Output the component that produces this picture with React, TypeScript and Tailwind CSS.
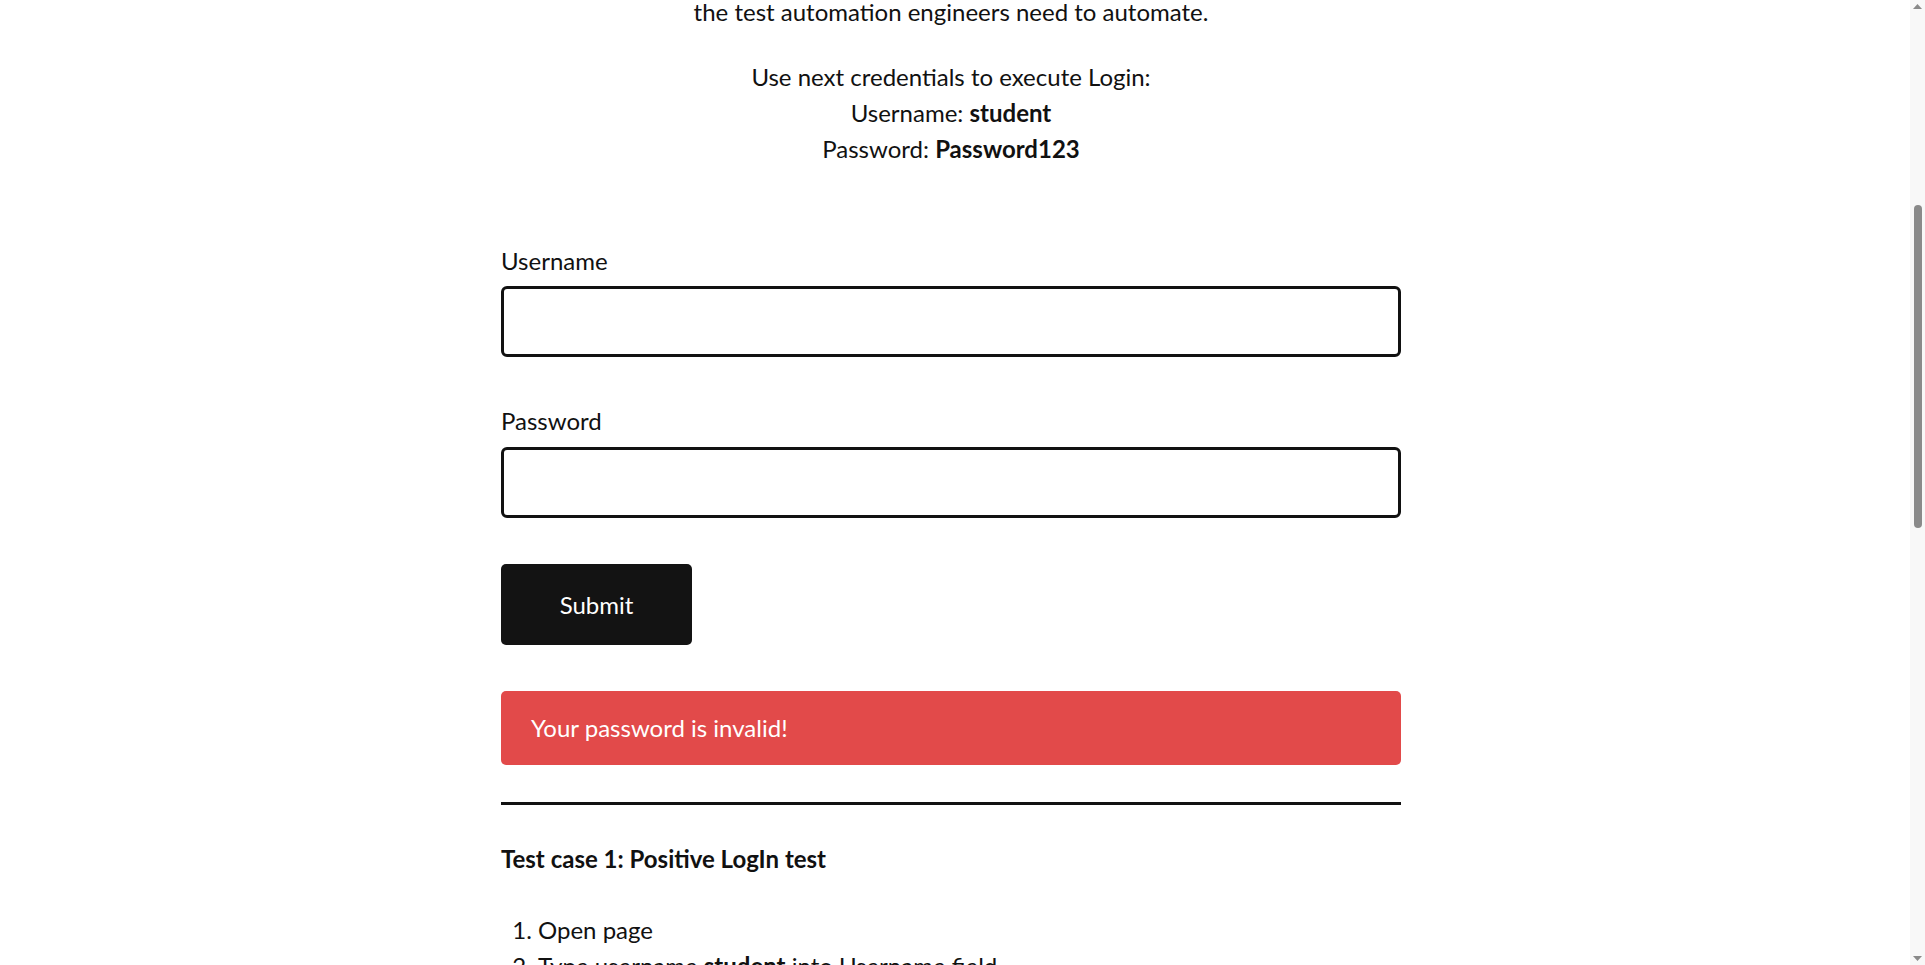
const font = "font-['Lato','Liberation_Sans',sans-serif]";

function Scrollbar() {
  return (
    <div className="w-[15px] h-full bg-[#f8f8f8] flex flex-col items-center shrink-0">
      <svg className="w-[9px] h-[5px] mt-[4px]" viewBox="0 0 9 5">
        <polygon points="0,5 4.5,0 9,5" fill="#8a8a8a" />
      </svg>
      <div className="w-[8px] h-[323px] mt-[196px] rounded-full bg-[#8a8a8a]" />
      <div className="flex-1" />
      <svg className="w-[9px] h-[5px] mb-[4px]" viewBox="0 0 9 5">
        <polygon points="0,0 9,0 4.5,5" fill="#8a8a8a" />
      </svg>
    </div>
  );
}

export default function App() {
  return (
    <div className={`flex h-[965px] w-full overflow-hidden bg-white text-[#111] ${font}`}>
      <main className="flex-1 overflow-hidden pr-[8px]">
        <div className="w-[900px] mx-auto text-[24px] leading-[36px]">
          {/* Intro */}
          <p className="text-center -mt-[6px]">the test automation engineers need to automate.</p>
          <p className="text-center mt-[29px]">
            Use next credentials to execute Login:
            <br />
            Username: <b>student</b>
            <br />
            Password: <b>Password123</b>
          </p>

          {/* Form */}
          <div className="mt-[76px]">
            <label className="block">Username</label>
            <input type="text" className="block w-full h-[71px] mt-[7px] border-[3px] border-[#111] rounded-[6px] px-4 outline-none" />
          </div>
          <div className="mt-[46px]">
            <label className="block">Password</label>
            <input type="password" className="block w-full h-[71px] mt-[8px] border-[3px] border-[#111] rounded-[6px] px-4 outline-none" />
          </div>
          <button className="mt-[46px] w-[191px] h-[81px] rounded-[5px] bg-[#131313] text-white">Submit</button>

          <div className="mt-[46px] h-[74px] rounded-[5px] bg-[#e24a4a] text-white flex items-center px-[30px]">
            Your password is invalid!
          </div>

          <hr className="mt-[37px] border-t-[3px] border-[#111]" />

          {/* Test cases */}
          <h3 className="mt-[36px] font-bold">Test case 1: Positive LogIn test</h3>
          <ol className="mt-[35px] list-decimal pl-[37px]">
            <li>Open page</li>
            <li>
              Type username <b>student</b> into Username field
            </li>
            <li>
              Type password <b>Password123</b> into Password field
            </li>
          </ol>
        </div>
      </main>
      <Scrollbar />
    </div>
  );
}
